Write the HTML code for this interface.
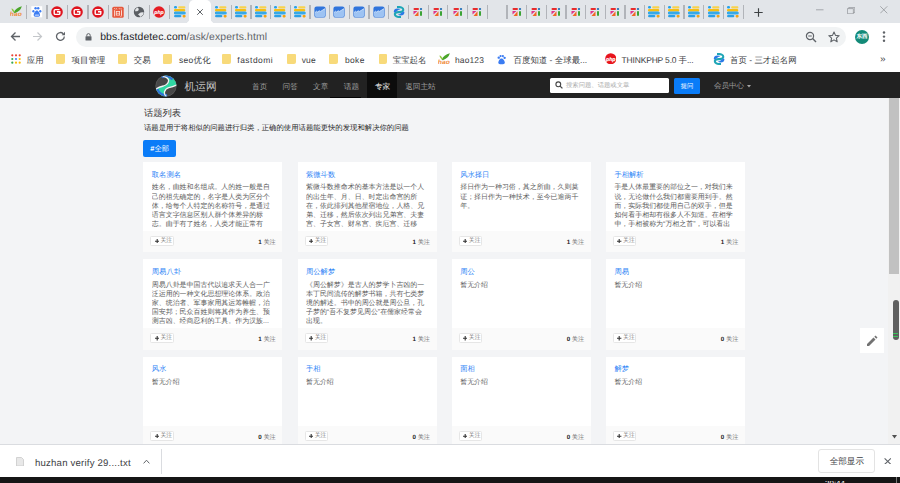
<!DOCTYPE html>
<html><head><meta charset="utf-8">
<style>
*{box-sizing:border-box}
i{font-style:normal}
html,body{margin:0;padding:0}
body{width:900px;height:483px;overflow:hidden;position:relative;background:#fff;font-family:"Liberation Sans",sans-serif;text-rendering:geometricPrecision}
.abs{position:absolute}
#tabstrip{position:absolute;left:0;top:0;width:900px;height:23.3px;background:#e2e5e9}
.ico{position:absolute;width:12px;height:12px}
.ico svg{display:block}
.sep{position:absolute;top:5.2px;width:1.3px;height:13.8px;background:#b1b4b9}
#atab{position:absolute;left:188.7px;top:0;width:22.6px;height:23.3px;background:#fff;border-radius:5px 5px 0 0}
#atab:before,#atab:after{content:"";position:absolute;bottom:0;width:3px;height:3px}
#atab:before{left:-3px;background:radial-gradient(circle at 0 0,transparent 2.6px,#fff 3px)}
#atab:after{right:-3px;background:radial-gradient(circle at 100% 0,transparent 2.6px,#fff 3px)}
#toolbar{position:absolute;left:0;top:23.3px;width:900px;height:48.7px;background:#fff}
#omni{position:absolute;left:76.2px;top:26.5px;width:769.8px;height:20.2px;border-radius:10px;background:#f1f3f4}
#url{position:absolute;left:100.2px;top:31.5px;font-size:10.4px;line-height:12px;color:#5f6368;white-space:nowrap;letter-spacing:0.12px}
#url b{font-weight:normal;color:#202124}
.bm{--z:0.45px;position:absolute;top:54.5px;font-size:8.45px;line-height:10px;color:#3c4043;white-space:nowrap}
.fold{position:absolute;top:53.7px;width:8.7px;height:10.5px;background:#f8da7a;border-radius:1px 1px 2px 1px}
#hdr{position:absolute;left:0;top:72px;width:900px;height:25.6px;background:#222}
.nav{--z:-0.35px;position:absolute;top:81.6px;font-size:7.65px;line-height:9px;color:#9d9d9d;white-space:nowrap}
#page{position:absolute;left:0;top:97.6px;width:888px;height:346.4px;background:#f3f4f6}
.card{position:absolute;width:139px;height:90.3px;background:#fff;overflow:hidden}
.ct{--z:0.3px;position:absolute;left:8.5px;top:7.5px;font-size:7.3px;line-height:9px;color:#2a82f6;white-space:nowrap}
.cd{position:absolute;left:8.5px;top:21.4px;width:128px;height:46px;overflow:hidden;font-size:6.96px;line-height:9.15px;color:#5a5a5a;white-space:nowrap}
.cf{position:absolute;left:0;top:69px;width:139px;height:21.3px;background:#fafafa}
.fb{position:absolute;left:7.1px;top:4.9px;width:23.4px;height:10.1px;border:1px solid #e6e6e6;background:#fff;border-radius:1.5px;display:flex;align-items:center;padding-left:3.3px}
.fb svg{display:block;flex:none}
.fbt{display:block;margin-left:1.4px;font-size:5.9px;line-height:8px;color:#777;white-space:nowrap}
.cnt{position:absolute;right:6.5px;top:8px;font-size:6.2px;line-height:8px;color:#777;white-space:nowrap}
.cnt b{color:#222}
#dl{position:absolute;left:0;top:444px;width:900px;height:33.4px;background:#fff;border-top:1px solid #dadce0}
#task{position:absolute;left:0;top:477.4px;width:900px;height:6px;background:#151515}
</style></head><body>
<div id="tabstrip"></div>
<div class="ico" style="left:10.20px;top:6.00px"><svg width="12" height="12" viewBox="0 0 12 12"><path d="M3.6 6.8 Q5.5 1.8 11.9 0.3 Q10.5 5.2 4.6 7.2Z" fill="#4aa52a"/><path d="M1.4 2.4 Q3.8 2.6 4.9 6.6 Q2.2 5.9 1.4 2.4Z" fill="#8cc63a"/><text x="-0.2" y="10.4" font-family="Liberation Sans" font-size="6.2" font-style="italic" font-weight="bold" fill="#f08d3c" textLength="12" lengthAdjust="spacingAndGlyphs">hao</text></svg></div>
<div class="ico" style="left:30.63px;top:6.00px"><svg width="12" height="12" viewBox="0 0 12 12"><rect x="0.3" y="0.2" width="10.9" height="11.1" fill="#fff"/><ellipse cx="2.4" cy="5.2" rx="1.1" ry="1.3" fill="#3c7df3"/><ellipse cx="4.6" cy="2.3" rx="1.2" ry="1.2" fill="#3c7df3"/><ellipse cx="7.2" cy="2.3" rx="1.2" ry="1.2" fill="#3c7df3"/><ellipse cx="9.3" cy="5.2" rx="1.1" ry="1.3" fill="#3c7df3"/><path d="M5.9 4.6 C4.4 4.6 2.8 7.4 2.7 9 C2.6 10.6 4 10.8 5.9 10.8 C7.8 10.8 9.1 10.6 9 9 C8.9 7.4 7.4 4.6 5.9 4.6Z" fill="#3c7df3"/><path d="M4.3 8.4 V9.6 H5.5 V8.4 M6.4 8.4 V9.6 H7.6 V8.4" fill="none" stroke="#fff" stroke-width="0.55"/></svg></div>
<div class="ico" style="left:51.06px;top:6.00px"><svg width="12" height="12" viewBox="0 0 12 12"><circle cx="6" cy="6" r="5.8" fill="#e0141e"/><path d="M8.6 3.6 H4.2 Q3.2 3.6 3.2 4.6 V7.4 Q3.2 8.4 4.2 8.4 H7.8 Q8.8 8.4 8.8 7.4 V5.8 H6" fill="none" stroke="#fff" stroke-width="1.4"/></svg></div>
<div class="ico" style="left:71.49px;top:6.00px"><svg width="12" height="12" viewBox="0 0 12 12"><circle cx="6" cy="6" r="5.8" fill="#e0141e"/><path d="M8.6 3.6 H4.2 Q3.2 3.6 3.2 4.6 V7.4 Q3.2 8.4 4.2 8.4 H7.8 Q8.8 8.4 8.8 7.4 V5.8 H6" fill="none" stroke="#fff" stroke-width="1.4"/></svg></div>
<div class="ico" style="left:91.92px;top:6.00px"><svg width="12" height="12" viewBox="0 0 12 12"><circle cx="6" cy="6" r="5.8" fill="#e0141e"/><path d="M8.6 3.6 H4.2 Q3.2 3.6 3.2 4.6 V7.4 Q3.2 8.4 4.2 8.4 H7.8 Q8.8 8.4 8.8 7.4 V5.8 H6" fill="none" stroke="#fff" stroke-width="1.4"/></svg></div>
<div class="ico" style="left:112.35px;top:6.00px"><svg width="12" height="12" viewBox="0 0 12 12"><rect x="0.3" y="0.8" width="11.4" height="11" rx="1.5" fill="#e6573b"/><path d="M2.3 2.2 L3.2 3.4 M4.2 2.2 L4.8 3.4 M7 2.2 L7.9 3.4 M8.9 2.2 L9.5 3.4" stroke="#fde5de" stroke-width="0.8"/><path d="M2.6 4.2 V10.4 M9.5 4.2 V9.6 Q9.5 10.6 8.5 10.3" fill="none" stroke="#fde5de" stroke-width="0.9"/><rect x="4.3" y="5.5" width="3.3" height="3.6" fill="none" stroke="#fde5de" stroke-width="0.8"/><path d="M4.3 7.3 H7.6" stroke="#fde5de" stroke-width="0.6"/></svg></div>
<div class="ico" style="left:132.78px;top:6.00px"><svg width="12" height="12" viewBox="0 0 12 12"><circle cx="6" cy="6" r="5.2" fill="#5a5e63"/><path d="M4.2 1.4 Q6.5 2.4 5.4 4.4 Q3.8 5.6 2 5.2 Q1.8 3 4.2 1.4Z" fill="#e3e5e8"/><path d="M10.9 6.6 Q9.5 6 7.6 6.6 Q6 7.6 5 8.6 Q6.4 9.6 7.4 10.9 Q10.3 9.8 10.9 6.6Z" fill="#e3e5e8"/></svg></div>
<div class="ico" style="left:153.21px;top:6.00px"><svg width="12" height="12" viewBox="0 0 12 12"><circle cx="6" cy="6" r="5.8" fill="#e51c23"/><text x="6" y="7.7" text-anchor="middle" font-family="Liberation Sans" font-size="5.2" font-style="italic" font-weight="bold" fill="#ffffff" stroke="#fff" stroke-width="0.15">php</text></svg></div>
<div class="ico" style="left:173.64px;top:6.00px"><svg width="12" height="12" viewBox="0 0 12 12"><rect x="4.2" y="0.2" width="7.2" height="2.2" rx="1" fill="#f7d24e"/><rect x="0" y="0.1" width="3" height="2.4" rx="1.2" fill="#27a3ea"/><path d="M1.2 2.9 H10 A1.3 1.3 0 0 1 10 5.5 H1.2 A1.2 1.2 0 0 1 1.2 2.9Z" fill="#f7bd12"/><path d="M1.2 5.5 H10.3 A1.5 1.5 0 0 1 10.3 8.5 H1.2 A1.5 1.5 0 0 1 1.2 5.5Z" fill="#35a9e9"/><rect x="0" y="8.9" width="7.4" height="2.4" rx="1.2" fill="#2aa0e6"/><rect x="8.6" y="8.9" width="3" height="2.5" rx="0.8" fill="#f6a312"/></svg></div>
<div class="sep" style="left:26.00px"></div>
<div class="sep" style="left:46.43px"></div>
<div class="sep" style="left:66.86px"></div>
<div class="sep" style="left:87.29px"></div>
<div class="sep" style="left:107.72px"></div>
<div class="sep" style="left:128.15px"></div>
<div class="sep" style="left:148.58px"></div>
<div class="sep" style="left:169.01px"></div>
<div class="ico" style="left:215.30px;top:6.00px"><svg width="12" height="12" viewBox="0 0 12 12"><rect x="4.2" y="0.2" width="7.2" height="2.2" rx="1" fill="#f7d24e"/><rect x="0" y="0.1" width="3" height="2.4" rx="1.2" fill="#27a3ea"/><path d="M1.2 2.9 H10 A1.3 1.3 0 0 1 10 5.5 H1.2 A1.2 1.2 0 0 1 1.2 2.9Z" fill="#f7bd12"/><path d="M1.2 5.5 H10.3 A1.5 1.5 0 0 1 10.3 8.5 H1.2 A1.5 1.5 0 0 1 1.2 5.5Z" fill="#35a9e9"/><rect x="0" y="8.9" width="7.4" height="2.4" rx="1.2" fill="#2aa0e6"/><rect x="8.6" y="8.9" width="3" height="2.5" rx="0.8" fill="#f6a312"/></svg></div>
<div class="ico" style="left:234.99px;top:6.00px"><svg width="12" height="12" viewBox="0 0 12 12"><rect x="4.2" y="0.2" width="7.2" height="2.2" rx="1" fill="#f7d24e"/><rect x="0" y="0.1" width="3" height="2.4" rx="1.2" fill="#27a3ea"/><path d="M1.2 2.9 H10 A1.3 1.3 0 0 1 10 5.5 H1.2 A1.2 1.2 0 0 1 1.2 2.9Z" fill="#f7bd12"/><path d="M1.2 5.5 H10.3 A1.5 1.5 0 0 1 10.3 8.5 H1.2 A1.5 1.5 0 0 1 1.2 5.5Z" fill="#35a9e9"/><rect x="0" y="8.9" width="7.4" height="2.4" rx="1.2" fill="#2aa0e6"/><rect x="8.6" y="8.9" width="3" height="2.5" rx="0.8" fill="#f6a312"/></svg></div>
<div class="ico" style="left:254.68px;top:6.00px"><svg width="12" height="12" viewBox="0 0 12 12"><rect x="4.2" y="0.2" width="7.2" height="2.2" rx="1" fill="#f7d24e"/><rect x="0" y="0.1" width="3" height="2.4" rx="1.2" fill="#27a3ea"/><path d="M1.2 2.9 H10 A1.3 1.3 0 0 1 10 5.5 H1.2 A1.2 1.2 0 0 1 1.2 2.9Z" fill="#f7bd12"/><path d="M1.2 5.5 H10.3 A1.5 1.5 0 0 1 10.3 8.5 H1.2 A1.5 1.5 0 0 1 1.2 5.5Z" fill="#35a9e9"/><rect x="0" y="8.9" width="7.4" height="2.4" rx="1.2" fill="#2aa0e6"/><rect x="8.6" y="8.9" width="3" height="2.5" rx="0.8" fill="#f6a312"/></svg></div>
<div class="ico" style="left:274.37px;top:6.00px"><svg width="12" height="12" viewBox="0 0 12 12"><rect x="4.2" y="0.2" width="7.2" height="2.2" rx="1" fill="#f7d24e"/><rect x="0" y="0.1" width="3" height="2.4" rx="1.2" fill="#27a3ea"/><path d="M1.2 2.9 H10 A1.3 1.3 0 0 1 10 5.5 H1.2 A1.2 1.2 0 0 1 1.2 2.9Z" fill="#f7bd12"/><path d="M1.2 5.5 H10.3 A1.5 1.5 0 0 1 10.3 8.5 H1.2 A1.5 1.5 0 0 1 1.2 5.5Z" fill="#35a9e9"/><rect x="0" y="8.9" width="7.4" height="2.4" rx="1.2" fill="#2aa0e6"/><rect x="8.6" y="8.9" width="3" height="2.5" rx="0.8" fill="#f6a312"/></svg></div>
<div class="ico" style="left:294.06px;top:6.00px"><svg width="12" height="12" viewBox="0 0 12 12"><rect x="4.2" y="0.2" width="7.2" height="2.2" rx="1" fill="#f7d24e"/><rect x="0" y="0.1" width="3" height="2.4" rx="1.2" fill="#27a3ea"/><path d="M1.2 2.9 H10 A1.3 1.3 0 0 1 10 5.5 H1.2 A1.2 1.2 0 0 1 1.2 2.9Z" fill="#f7bd12"/><path d="M1.2 5.5 H10.3 A1.5 1.5 0 0 1 10.3 8.5 H1.2 A1.5 1.5 0 0 1 1.2 5.5Z" fill="#35a9e9"/><rect x="0" y="8.9" width="7.4" height="2.4" rx="1.2" fill="#2aa0e6"/><rect x="8.6" y="8.9" width="3" height="2.5" rx="0.8" fill="#f6a312"/></svg></div>
<div class="ico" style="left:313.75px;top:6.00px"><svg width="12" height="12" viewBox="0 0 12 12"><rect x="0.4" y="0.6" width="11.2" height="11" rx="2.2" fill="#2f74dc"/><path d="M1 11 V6.5 L2.6 5.2 L3.6 6 L5.2 4.8 L6.5 5.4 L8.3 4.3 L11.1 2.6 V9.4 Q11.1 11.1 9.4 11.1 H2.6 Q1 11.1 1 9.4Z" fill="#9dc3f3"/><path d="M1 6.5 L2.6 5.2 L3.6 6 L5.2 4.8 L6.5 5.4 L8.3 4.3 L11.1 2.6" fill="none" stroke="#e8f1fc" stroke-width="0.7"/></svg></div>
<div class="ico" style="left:333.44px;top:6.00px"><svg width="12" height="12" viewBox="0 0 12 12"><rect x="0.4" y="0.6" width="11.2" height="11" rx="2.2" fill="#2f74dc"/><path d="M1 11 V6.5 L2.6 5.2 L3.6 6 L5.2 4.8 L6.5 5.4 L8.3 4.3 L11.1 2.6 V9.4 Q11.1 11.1 9.4 11.1 H2.6 Q1 11.1 1 9.4Z" fill="#9dc3f3"/><path d="M1 6.5 L2.6 5.2 L3.6 6 L5.2 4.8 L6.5 5.4 L8.3 4.3 L11.1 2.6" fill="none" stroke="#e8f1fc" stroke-width="0.7"/></svg></div>
<div class="ico" style="left:353.13px;top:6.00px"><svg width="12" height="12" viewBox="0 0 12 12"><rect x="0.4" y="0.6" width="11.2" height="11" rx="2.2" fill="#2f74dc"/><path d="M1 11 V6.5 L2.6 5.2 L3.6 6 L5.2 4.8 L6.5 5.4 L8.3 4.3 L11.1 2.6 V9.4 Q11.1 11.1 9.4 11.1 H2.6 Q1 11.1 1 9.4Z" fill="#9dc3f3"/><path d="M1 6.5 L2.6 5.2 L3.6 6 L5.2 4.8 L6.5 5.4 L8.3 4.3 L11.1 2.6" fill="none" stroke="#e8f1fc" stroke-width="0.7"/></svg></div>
<div class="ico" style="left:372.82px;top:6.00px"><svg width="12" height="12" viewBox="0 0 12 12"><rect x="0.4" y="0.6" width="11.2" height="11" rx="2.2" fill="#2f74dc"/><path d="M1 11 V6.5 L2.6 5.2 L3.6 6 L5.2 4.8 L6.5 5.4 L8.3 4.3 L11.1 2.6 V9.4 Q11.1 11.1 9.4 11.1 H2.6 Q1 11.1 1 9.4Z" fill="#9dc3f3"/><path d="M1 6.5 L2.6 5.2 L3.6 6 L5.2 4.8 L6.5 5.4 L8.3 4.3 L11.1 2.6" fill="none" stroke="#e8f1fc" stroke-width="0.7"/></svg></div>
<div class="ico" style="left:392.51px;top:6.00px"><svg width="12" height="12" viewBox="0 0 12 12"><path d="M4 1 Q10.3 0.8 10.3 3.9 Q10 6.2 6 6.1 Q2 6 1.8 8.1 Q1.8 11.2 8 11" fill="none" stroke="#1ea6b6" stroke-width="2.1"/><path d="M0.8 5.4 Q1 2.5 4.4 2.5 Q6.6 2.5 7.3 3.5 Q5.6 3.6 4.6 4.6 Q3.3 5.9 1.3 6.5 Q0.7 6.1 0.8 5.4Z" fill="#2a7ae6"/><path d="M11.4 6.6 Q11.2 9.5 7.8 9.5 Q5.6 9.5 4.9 8.5 Q6.6 8.4 7.6 7.4 Q8.9 6.1 10.9 5.5 Q11.5 5.9 11.4 6.6Z" fill="#2a7ae6"/></svg></div>
<div class="ico" style="left:412.20px;top:6.00px"><svg width="12" height="12" viewBox="0 0 12 12"><rect x="1.5" y="2" width="5.5" height="2" rx="1" fill="#e82b2b"/><ellipse cx="9" cy="3" rx="1.2" ry="0.95" fill="#1e6fb8"/><path d="M1.5 5 L5.5 5 L1.5 8.5Z" fill="#e0338a"/><path d="M6.5 5.2 L6.5 10 L2.5 10Z" fill="#f26522"/><rect x="8" y="5" width="2" height="5" rx="1" fill="#3aa335"/></svg></div>
<div class="ico" style="left:431.89px;top:6.00px"><svg width="12" height="12" viewBox="0 0 12 12"><rect x="1.5" y="2" width="5.5" height="2" rx="1" fill="#e82b2b"/><ellipse cx="9" cy="3" rx="1.2" ry="0.95" fill="#1e6fb8"/><path d="M1.5 5 L5.5 5 L1.5 8.5Z" fill="#e0338a"/><path d="M6.5 5.2 L6.5 10 L2.5 10Z" fill="#f26522"/><rect x="8" y="5" width="2" height="5" rx="1" fill="#3aa335"/></svg></div>
<div class="ico" style="left:451.58px;top:6.00px"><svg width="12" height="12" viewBox="0 0 12 12"><rect x="1.5" y="2" width="5.5" height="2" rx="1" fill="#e82b2b"/><ellipse cx="9" cy="3" rx="1.2" ry="0.95" fill="#1e6fb8"/><path d="M1.5 5 L5.5 5 L1.5 8.5Z" fill="#e0338a"/><path d="M6.5 5.2 L6.5 10 L2.5 10Z" fill="#f26522"/><rect x="8" y="5" width="2" height="5" rx="1" fill="#3aa335"/></svg></div>
<div class="ico" style="left:471.27px;top:6.00px"><svg width="12" height="12" viewBox="0 0 12 12"><rect x="1.5" y="2" width="5.5" height="2" rx="1" fill="#e82b2b"/><ellipse cx="9" cy="3" rx="1.2" ry="0.95" fill="#1e6fb8"/><path d="M1.5 5 L5.5 5 L1.5 8.5Z" fill="#e0338a"/><path d="M6.5 5.2 L6.5 10 L2.5 10Z" fill="#f26522"/><rect x="8" y="5" width="2" height="5" rx="1" fill="#3aa335"/></svg></div>
<div class="ico" style="left:490.96px;top:6.00px"></div>
<div class="ico" style="left:510.65px;top:6.00px"><svg width="12" height="12" viewBox="0 0 12 12"><rect x="1.5" y="2" width="5.5" height="2" rx="1" fill="#e82b2b"/><ellipse cx="9" cy="3" rx="1.2" ry="0.95" fill="#1e6fb8"/><path d="M1.5 5 L5.5 5 L1.5 8.5Z" fill="#e0338a"/><path d="M6.5 5.2 L6.5 10 L2.5 10Z" fill="#f26522"/><rect x="8" y="5" width="2" height="5" rx="1" fill="#3aa335"/></svg></div>
<div class="ico" style="left:530.34px;top:6.00px"><svg width="12" height="12" viewBox="0 0 12 12"><rect x="1.5" y="2" width="5.5" height="2" rx="1" fill="#e82b2b"/><ellipse cx="9" cy="3" rx="1.2" ry="0.95" fill="#1e6fb8"/><path d="M1.5 5 L5.5 5 L1.5 8.5Z" fill="#e0338a"/><path d="M6.5 5.2 L6.5 10 L2.5 10Z" fill="#f26522"/><rect x="8" y="5" width="2" height="5" rx="1" fill="#3aa335"/></svg></div>
<div class="ico" style="left:550.03px;top:6.00px"><svg width="12" height="12" viewBox="0 0 12 12"><rect x="1.5" y="2" width="5.5" height="2" rx="1" fill="#e82b2b"/><ellipse cx="9" cy="3" rx="1.2" ry="0.95" fill="#1e6fb8"/><path d="M1.5 5 L5.5 5 L1.5 8.5Z" fill="#e0338a"/><path d="M6.5 5.2 L6.5 10 L2.5 10Z" fill="#f26522"/><rect x="8" y="5" width="2" height="5" rx="1" fill="#3aa335"/></svg></div>
<div class="ico" style="left:569.72px;top:6.00px"><svg width="12" height="12" viewBox="0 0 12 12"><rect x="1.5" y="2" width="5.5" height="2" rx="1" fill="#e82b2b"/><ellipse cx="9" cy="3" rx="1.2" ry="0.95" fill="#1e6fb8"/><path d="M1.5 5 L5.5 5 L1.5 8.5Z" fill="#e0338a"/><path d="M6.5 5.2 L6.5 10 L2.5 10Z" fill="#f26522"/><rect x="8" y="5" width="2" height="5" rx="1" fill="#3aa335"/></svg></div>
<div class="ico" style="left:589.41px;top:6.00px"><svg width="12" height="12" viewBox="0 0 12 12"><rect x="1.5" y="2" width="5.5" height="2" rx="1" fill="#e82b2b"/><ellipse cx="9" cy="3" rx="1.2" ry="0.95" fill="#1e6fb8"/><path d="M1.5 5 L5.5 5 L1.5 8.5Z" fill="#e0338a"/><path d="M6.5 5.2 L6.5 10 L2.5 10Z" fill="#f26522"/><rect x="8" y="5" width="2" height="5" rx="1" fill="#3aa335"/></svg></div>
<div class="ico" style="left:609.10px;top:6.00px"><svg width="12" height="12" viewBox="0 0 12 12"><rect x="1.5" y="2" width="5.5" height="2" rx="1" fill="#e82b2b"/><ellipse cx="9" cy="3" rx="1.2" ry="0.95" fill="#1e6fb8"/><path d="M1.5 5 L5.5 5 L1.5 8.5Z" fill="#e0338a"/><path d="M6.5 5.2 L6.5 10 L2.5 10Z" fill="#f26522"/><rect x="8" y="5" width="2" height="5" rx="1" fill="#3aa335"/></svg></div>
<div class="ico" style="left:628.79px;top:6.00px"><svg width="12" height="12" viewBox="0 0 12 12"><rect x="1.5" y="2" width="5.5" height="2" rx="1" fill="#e82b2b"/><ellipse cx="9" cy="3" rx="1.2" ry="0.95" fill="#1e6fb8"/><path d="M1.5 5 L5.5 5 L1.5 8.5Z" fill="#e0338a"/><path d="M6.5 5.2 L6.5 10 L2.5 10Z" fill="#f26522"/><rect x="8" y="5" width="2" height="5" rx="1" fill="#3aa335"/></svg></div>
<div class="ico" style="left:648.48px;top:6.00px"><svg width="12" height="12" viewBox="0 0 12 12"><rect x="4.2" y="0.2" width="7.2" height="2.2" rx="1" fill="#f7d24e"/><rect x="0" y="0.1" width="3" height="2.4" rx="1.2" fill="#27a3ea"/><path d="M1.2 2.9 H10 A1.3 1.3 0 0 1 10 5.5 H1.2 A1.2 1.2 0 0 1 1.2 2.9Z" fill="#f7bd12"/><path d="M1.2 5.5 H10.3 A1.5 1.5 0 0 1 10.3 8.5 H1.2 A1.5 1.5 0 0 1 1.2 5.5Z" fill="#35a9e9"/><rect x="0" y="8.9" width="7.4" height="2.4" rx="1.2" fill="#2aa0e6"/><rect x="8.6" y="8.9" width="3" height="2.5" rx="0.8" fill="#f6a312"/></svg></div>
<div class="ico" style="left:668.17px;top:6.00px"><svg width="12" height="12" viewBox="0 0 12 12"><rect x="4.2" y="0.2" width="7.2" height="2.2" rx="1" fill="#f7d24e"/><rect x="0" y="0.1" width="3" height="2.4" rx="1.2" fill="#27a3ea"/><path d="M1.2 2.9 H10 A1.3 1.3 0 0 1 10 5.5 H1.2 A1.2 1.2 0 0 1 1.2 2.9Z" fill="#f7bd12"/><path d="M1.2 5.5 H10.3 A1.5 1.5 0 0 1 10.3 8.5 H1.2 A1.5 1.5 0 0 1 1.2 5.5Z" fill="#35a9e9"/><rect x="0" y="8.9" width="7.4" height="2.4" rx="1.2" fill="#2aa0e6"/><rect x="8.6" y="8.9" width="3" height="2.5" rx="0.8" fill="#f6a312"/></svg></div>
<div class="ico" style="left:687.86px;top:6.00px"><svg width="12" height="12" viewBox="0 0 12 12"><rect x="4.2" y="0.2" width="7.2" height="2.2" rx="1" fill="#f7d24e"/><rect x="0" y="0.1" width="3" height="2.4" rx="1.2" fill="#27a3ea"/><path d="M1.2 2.9 H10 A1.3 1.3 0 0 1 10 5.5 H1.2 A1.2 1.2 0 0 1 1.2 2.9Z" fill="#f7bd12"/><path d="M1.2 5.5 H10.3 A1.5 1.5 0 0 1 10.3 8.5 H1.2 A1.5 1.5 0 0 1 1.2 5.5Z" fill="#35a9e9"/><rect x="0" y="8.9" width="7.4" height="2.4" rx="1.2" fill="#2aa0e6"/><rect x="8.6" y="8.9" width="3" height="2.5" rx="0.8" fill="#f6a312"/></svg></div>
<div class="ico" style="left:707.55px;top:6.00px"><svg width="12" height="12" viewBox="0 0 12 12"><rect x="4.2" y="0.2" width="7.2" height="2.2" rx="1" fill="#f7d24e"/><rect x="0" y="0.1" width="3" height="2.4" rx="1.2" fill="#27a3ea"/><path d="M1.2 2.9 H10 A1.3 1.3 0 0 1 10 5.5 H1.2 A1.2 1.2 0 0 1 1.2 2.9Z" fill="#f7bd12"/><path d="M1.2 5.5 H10.3 A1.5 1.5 0 0 1 10.3 8.5 H1.2 A1.5 1.5 0 0 1 1.2 5.5Z" fill="#35a9e9"/><rect x="0" y="8.9" width="7.4" height="2.4" rx="1.2" fill="#2aa0e6"/><rect x="8.6" y="8.9" width="3" height="2.5" rx="0.8" fill="#f6a312"/></svg></div>
<div class="ico" style="left:727.24px;top:6.00px"><svg width="12" height="12" viewBox="0 0 12 12"><rect x="4.2" y="0.2" width="7.2" height="2.2" rx="1" fill="#f7d24e"/><rect x="0" y="0.1" width="3" height="2.4" rx="1.2" fill="#27a3ea"/><path d="M1.2 2.9 H10 A1.3 1.3 0 0 1 10 5.5 H1.2 A1.2 1.2 0 0 1 1.2 2.9Z" fill="#f7bd12"/><path d="M1.2 5.5 H10.3 A1.5 1.5 0 0 1 10.3 8.5 H1.2 A1.5 1.5 0 0 1 1.2 5.5Z" fill="#35a9e9"/><rect x="0" y="8.9" width="7.4" height="2.4" rx="1.2" fill="#2aa0e6"/><rect x="8.6" y="8.9" width="3" height="2.5" rx="0.8" fill="#f6a312"/></svg></div>
<div class="sep" style="left:230.60px"></div>
<div class="sep" style="left:250.29px"></div>
<div class="sep" style="left:269.98px"></div>
<div class="sep" style="left:289.67px"></div>
<div class="sep" style="left:309.36px"></div>
<div class="sep" style="left:329.05px"></div>
<div class="sep" style="left:348.74px"></div>
<div class="sep" style="left:368.43px"></div>
<div class="sep" style="left:388.12px"></div>
<div class="sep" style="left:407.81px"></div>
<div class="sep" style="left:427.50px"></div>
<div class="sep" style="left:447.19px"></div>
<div class="sep" style="left:466.88px"></div>
<div class="sep" style="left:486.57px"></div>
<div class="sep" style="left:506.26px"></div>
<div class="sep" style="left:525.95px"></div>
<div class="sep" style="left:545.64px"></div>
<div class="sep" style="left:565.33px"></div>
<div class="sep" style="left:585.02px"></div>
<div class="sep" style="left:604.71px"></div>
<div class="sep" style="left:624.40px"></div>
<div class="sep" style="left:644.09px"></div>
<div class="sep" style="left:663.78px"></div>
<div class="sep" style="left:683.47px"></div>
<div class="sep" style="left:703.16px"></div>
<div class="sep" style="left:722.85px"></div>
<div class="sep" style="left:742.54px"></div>
<div id="atab"><svg class="abs" style="left:7.2px;top:8.3px" width="8" height="8" viewBox="0 0 8 8"><path d="M1.2 1.2 L6.8 6.8 M6.8 1.2 L1.2 6.8" stroke="#5f6368" stroke-width="1"/></svg></div>
<!-- new tab + window controls -->
<svg class="abs" style="left:754.3px;top:7.6px" width="9" height="9" viewBox="0 0 9 9"><path d="M4.5 0.3 V8.7 M0.3 4.5 H8.7" stroke="#3c4043" stroke-width="1.15"/></svg>
<svg class="abs" style="left:816px;top:5px" width="7.5" height="10" viewBox="0 0 7.5 10"><path d="M0 4.8 H7.5" stroke="#8a8d91" stroke-width="0.7"/></svg>
<svg class="abs" style="left:847.2px;top:6.8px" width="8.2" height="7.2" viewBox="0 0 8.2 7.2"><path d="M1.8 1.6 V0.4 H7.8 V5.6 H6.4 M0.4 1.6 H6.4 V6.8 H0.4Z" fill="none" stroke="#8a8d91" stroke-width="0.7"/></svg>
<svg class="abs" style="left:880px;top:6px" width="7.6" height="7.6" viewBox="0 0 7.6 7.6"><path d="M0.3 0.3 L7.3 7.3 M7.3 0.3 L0.3 7.3" stroke="#8a8d91" stroke-width="0.7"/></svg>

<div id="toolbar"></div>
<!-- nav buttons -->
<svg class="abs" style="left:10px;top:31px" width="11" height="11" viewBox="0 0 11 11"><path d="M10 5.5 H1.5 M5.5 1.5 L1.5 5.5 L5.5 9.5" fill="none" stroke="#5f6368" stroke-width="1.3"/></svg>
<svg class="abs" style="left:31.6px;top:30.8px" width="11" height="11" viewBox="0 0 11 11"><path d="M1 5.5 H9.5 M5.5 1.5 L9.5 5.5 L5.5 9.5" fill="none" stroke="#c4c7ca" stroke-width="1.2"/></svg>
<svg class="abs" style="left:55px;top:30.8px" width="11" height="11" viewBox="0 0 11 11"><path d="M9.3 5.5 A3.9 3.9 0 1 1 8.2 2.7" fill="none" stroke="#5f6368" stroke-width="1.3"/><path d="M10 0.8 V4.2 H6.6Z" fill="#5f6368"/></svg>
<div id="omni"></div>
<svg class="abs" style="left:85px;top:33px" width="7" height="7.5" viewBox="0 0 7 7.5"><path d="M1.8 3.3 V2.3 A1.7 1.7 0 0 1 5.2 2.3 V3.3" fill="none" stroke="#5f6368" stroke-width="1"/><rect x="0.5" y="3.2" width="6" height="4.3" rx="0.5" fill="#5f6368"/></svg>
<div id="url"><b>bbs.fastdetec.com</b>/ask/experts.html</div>
<svg class="abs" style="left:805px;top:31px" width="12" height="12" viewBox="0 0 12 12"><circle cx="5" cy="5" r="3.6" fill="none" stroke="#5f6368" stroke-width="1.2"/><path d="M7.6 7.6 L11 11" stroke="#5f6368" stroke-width="1.4"/><path d="M3.2 5 H6.8" stroke="#5f6368" stroke-width="1"/></svg>
<svg class="abs" style="left:828px;top:30.8px" width="12" height="12" viewBox="0 0 12 12"><path d="M6 1 L7.5 4.4 L11.2 4.7 L8.4 7.1 L9.2 10.8 L6 8.9 L2.8 10.8 L3.6 7.1 L0.8 4.7 L4.5 4.4Z" fill="none" stroke="#5f6368" stroke-width="1.1" stroke-linejoin="round"/></svg>
<div class="abs" style="left:855px;top:29.6px;width:14px;height:14px;border-radius:50%;background:#138a78;color:#fff;font-size:5.6px;line-height:14px;text-align:center;font-weight:bold"><i>东西</i></div>
<svg class="abs" style="left:882.4px;top:31px" width="4" height="12" viewBox="0 0 4 12"><circle cx="2" cy="1.5" r="1.2" fill="#5f6368"/><circle cx="2" cy="5.6" r="1.2" fill="#5f6368"/><circle cx="2" cy="9.7" r="1.2" fill="#5f6368"/></svg>

<!-- bookmarks -->
<svg class="abs" style="left:10.7px;top:54px" width="10" height="10" viewBox="0 0 10 10">
<circle cx="1.3" cy="1.3" r="1.1" fill="#ea4335"/><circle cx="5" cy="1.3" r="1.1" fill="#ea4335"/><circle cx="8.7" cy="1.3" r="1.1" fill="#ea4335"/>
<circle cx="1.3" cy="5" r="1.1" fill="#34a853"/><circle cx="5" cy="5" r="1.1" fill="#4285f4"/><circle cx="8.7" cy="5" r="1.1" fill="#fbbc05"/>
<circle cx="1.3" cy="8.7" r="1.1" fill="#34a853"/><circle cx="5" cy="8.7" r="1.1" fill="#fbbc05"/><circle cx="8.7" cy="8.7" r="1.1" fill="#fbbc05"/></svg>
<div class="bm" style="left:26.7px"><i>应用</i></div>
<div class="fold" style="left:56.1px"></div><div class="bm" style="left:71.5px"><i>项目管理</i></div>
<div class="fold" style="left:118.2px"></div><div class="bm" style="left:133.7px"><i>交易</i></div>
<div class="fold" style="left:162.9px"></div><div class="bm" style="left:179px;letter-spacing:0.3px">seo<i>优化</i></div>
<div class="fold" style="left:221.9px"></div><div class="bm" style="left:237.3px;letter-spacing:0.5px">fastdomi</div>
<div class="fold" style="left:286.9px"></div><div class="bm" style="left:301.7px;letter-spacing:0.2px">vue</div>
<div class="fold" style="left:329.2px"></div><div class="bm" style="left:345px;letter-spacing:0.35px">boke</div>
<div class="fold" style="left:378.5px"></div><div class="bm" style="left:392.7px"><i>宝宝起名</i></div>
<div class="ico" style="left:437.8px;top:53.2px"><svg width="12" height="12" viewBox="0 0 12 12"><path d="M3.6 6.8 Q5.5 1.8 11.9 0.3 Q10.5 5.2 4.6 7.2Z" fill="#4aa52a"/><path d="M1.4 2.4 Q3.8 2.6 4.9 6.6 Q2.2 5.9 1.4 2.4Z" fill="#8cc63a"/><text x="-0.2" y="10.6" font-family="Liberation Sans" font-size="6.2" font-style="italic" font-weight="bold" fill="#f08d3c" textLength="12" lengthAdjust="spacingAndGlyphs">hao</text></svg></div>
<div class="bm" style="left:455px;letter-spacing:0.15px">hao123</div>
<div class="ico" style="left:496px;top:53.5px"><svg width="11" height="11" viewBox="0 0 12 12"><circle cx="3" cy="4" r="1.3" fill="#3b7cf2"/><circle cx="5" cy="2.3" r="1.2" fill="#3b7cf2"/><circle cx="7.5" cy="2.3" r="1.2" fill="#3b7cf2"/><circle cx="9.4" cy="4.2" r="1.3" fill="#3b7cf2"/><path d="M6 5 C4 5 2.5 8 2.5 9.5 C2.5 11 4 11.2 6 11.2 C8 11.2 9.6 11 9.6 9.5 C9.6 8 8 5 6 5Z" fill="#3b7cf2"/></svg></div>
<div class="bm" style="left:513.5px"><i>百度知道</i> - <i>全球最</i>...</div>
<div class="ico" style="left:604.6px;top:52.9px"><svg width="11.5" height="11.5" viewBox="0 0 12 12"><circle cx="6" cy="6" r="5.8" fill="#e8141c"/><text x="6" y="7.9" text-anchor="middle" font-family="Liberation Sans" font-size="5.4" font-style="italic" font-weight="bold" fill="#fff" stroke="#fff" stroke-width="0.2">php</text></svg></div>
<div class="bm" style="left:621.6px;letter-spacing:-0.15px">THINKPHP 5.0 <i>手</i>...</div>
<div class="ico" style="left:712.6px;top:53.1px"><svg width="12" height="12" viewBox="0 0 12 12"><path d="M4 1 Q10.3 0.8 10.3 3.9 Q10 6.2 6 6.1 Q2 6 1.8 8.1 Q1.8 11.2 8 11" fill="none" stroke="#1ea6b6" stroke-width="2.1"/><path d="M0.8 5.4 Q1 2.5 4.4 2.5 Q6.6 2.5 7.3 3.5 Q5.6 3.6 4.6 4.6 Q3.3 5.9 1.3 6.5 Q0.7 6.1 0.8 5.4Z" fill="#2a7ae6"/><path d="M11.4 6.6 Q11.2 9.5 7.8 9.5 Q5.6 9.5 4.9 8.5 Q6.6 8.4 7.6 7.4 Q8.9 6.1 10.9 5.5 Q11.5 5.9 11.4 6.6Z" fill="#2a7ae6"/></svg></div>
<div class="bm" style="left:730px"><i>首页</i> - <i>三才起名网</i></div>
<div class="bm" style="left:880px;font-size:10px">»</div>

<!-- site header -->
<div id="hdr"></div>
<svg class="abs" style="left:155.35px;top:75px" width="22" height="22" viewBox="0 0 22 22">
<defs><clipPath id="lc"><circle cx="11" cy="11" r="10.5"/></clipPath></defs>
<circle cx="11" cy="11" r="10.5" fill="#474747"/>
<g clip-path="url(#lc)">
<path d="M7.6 -1 L7.8 1.3 Q13.8 2.4 13.6 5.8 Q13.2 9.6 8.4 11 Q4.2 12 0 14.5 L-1 15 L-1 23 L12 23 L11.4 21.6 Q8.8 19.6 9.6 16.6 Q10.4 13.6 13.8 12.6 Q18 11.6 20.8 10.4 L23 9 L23 -1Z" fill="#30d7a2"/>
<path d="M6.5 2.2 A9.4 9.4 0 0 1 17.6 4.3" fill="none" stroke="#2d72d8" stroke-width="2.6"/>
<path d="M1.9 13.6 A9.4 9.4 0 0 0 12.2 20.4" fill="none" stroke="#2d72d8" stroke-width="2.8"/>
<path d="M7.8 1.3 Q13.8 2.4 13.6 5.8 Q13.2 9.6 8.4 11 Q4.2 12 0 14.5" fill="none" stroke="#f2f2f2" stroke-width="1.3"/>
<path d="M11.4 21.6 Q8.8 19.6 9.6 16.6 Q10.4 13.6 13.8 12.6 Q18 11.6 20.8 10.4 L23 9" fill="none" stroke="#f2f2f2" stroke-width="1.3"/>
</g>
<circle cx="11" cy="11" r="10.3" fill="none" stroke="#8a8a8a" stroke-width="0.5" stroke-opacity="0.5"/>
</svg>
<div class="abs" style="--z:-0.23px;left:184.4px;top:80.8px;font-size:10.77px;line-height:12px;color:#c4c4c4;white-space:nowrap"><i>机运网</i></div>
<div class="nav" style="left:252px"><i>首页</i></div>
<div class="nav" style="left:282.5px"><i>问答</i></div>
<div class="nav" style="left:313px"><i>文章</i></div>
<div class="nav" style="left:343.8px"><i>话题</i></div>
<div class="abs" style="left:366.8px;top:72px;width:30.4px;height:25.6px;background:#0c0c0c"></div>
<div class="abs" style="left:330.2px;top:96.6px;width:30.8px;height:1px;background:#050505"></div>
<div class="nav" style="left:374.9px;color:#fff"><i>专家</i></div>
<div class="nav" style="left:405.2px"><i>返回主站</i></div>
<div class="abs" style="left:550px;top:77.5px;width:118.8px;height:15.2px;background:#fff;border-radius:1.5px"></div>
<svg class="abs" style="left:554.5px;top:81px" width="8" height="8" viewBox="0 0 8 8"><circle cx="3.3" cy="3.3" r="2.4" fill="none" stroke="#444" stroke-width="1.1"/><path d="M5.1 5.1 L7.4 7.4" stroke="#444" stroke-width="1.3"/></svg>
<div class="abs" style="--z:0.33px;left:566px;top:81.7px;font-size:6.33px;line-height:8px;color:#aaa;white-space:nowrap"><i>搜索问题、话题或文章</i></div>
<div class="abs" style="left:674px;top:77.5px;width:26px;height:16px;background:#0a7cf8;border-radius:1.5px;color:#fff;font-size:6.3px;line-height:17px;text-align:center"><i>提问</i></div>
<div class="nav" style="left:714px;top:81.3px;font-size:7.52px;--z:-0.48px"><i>会员中心</i></div>
<svg class="abs" style="left:746.6px;top:84.8px" width="4" height="3" viewBox="0 0 4 3"><path d="M0 0 H4 L2 2.5Z" fill="#a8a8a8"/></svg>

<!-- page -->
<div id="page"></div>
<div class="abs" style="--z:0.25px;left:144px;top:107.6px;font-size:9.25px;line-height:11px;color:#333;white-space:nowrap"><i>话题列表</i></div>
<div class="abs" style="--z:0.36px;left:144px;top:122.6px;font-size:7.36px;line-height:9px;color:#1e1e1e;white-space:nowrap"><i>话题是用于将相似的问题进行归类，正确的使用话题能更快的发现和解决你的问题</i></div>
<div class="abs" style="left:143.3px;top:140.2px;width:32.7px;height:16.4px;background:#0a7cf8;border-radius:2px;color:#fff;font-size:7.3px;line-height:18px;text-align:center;white-space:nowrap"><b>#</b><i>全部</i></div>
<div class="card" style="left:143.30px;top:162.00px">
<div class="ct"><i>取名测名</i></div><div class="cd"><i>姓名，由姓和名组成。人的姓一般是自</i><br><i>己的祖先确定的，名字是人类为区分个</i><br><i>体，给每个人特定的名称符号，是通过</i><br><i>语言文字信息区别人群个体差异的标</i><br><i>志。由于有了姓名，人类才能正常有</i></div>
<div class="cf"><div class="fb"><svg width="4.4" height="4.4" viewBox="0 0 4.4 4.4"><path d="M2.2 0 V4.4 M0 2.2 H4.4" stroke="#333" stroke-width="1.1"/></svg><span class="fbt"><i>关注</i></span></div><div class="cnt"><b>1</b> <i>关注</i></div></div></div>
<div class="card" style="left:297.50px;top:162.00px">
<div class="ct"><i>紫微斗数</i></div><div class="cd"><i>紫微斗数推命术的基本方法是以一个人</i><br><i>的出生年、月、日、时定出命宫的所</i><br><i>在，依此排列其他星宿地位，人格、兄</i><br><i>弟、迁移，然后依次列出兄弟宫、夫妻</i><br><i>宫、子女宫、财帛宫、疾厄宫、迁移</i></div>
<div class="cf"><div class="fb"><svg width="4.4" height="4.4" viewBox="0 0 4.4 4.4"><path d="M2.2 0 V4.4 M0 2.2 H4.4" stroke="#333" stroke-width="1.1"/></svg><span class="fbt"><i>关注</i></span></div><div class="cnt"><b>1</b> <i>关注</i></div></div></div>
<div class="card" style="left:451.70px;top:162.00px">
<div class="ct"><i>风水择日</i></div><div class="cd"><i>择日作为一种习俗，其之所由，久则莫</i><br><i>证；择日作为一种技术，至今已逾两千</i><br><i>年。</i></div>
<div class="cf"><div class="fb"><svg width="4.4" height="4.4" viewBox="0 0 4.4 4.4"><path d="M2.2 0 V4.4 M0 2.2 H4.4" stroke="#333" stroke-width="1.1"/></svg><span class="fbt"><i>关注</i></span></div><div class="cnt"><b>1</b> <i>关注</i></div></div></div>
<div class="card" style="left:605.90px;top:162.00px">
<div class="ct"><i>手相解析</i></div><div class="cd"><i>手是人体最重要的部位之一，对我们来</i><br><i>说，无论做什么我们都需要用到手。然</i><br><i>而，实际我们都使用自己的双手，但是</i><br><i>如何看手相却有很多人不知道。在相学</i><br><i>中，手相被称为“万相之首”，可以看出</i></div>
<div class="cf"><div class="fb"><svg width="4.4" height="4.4" viewBox="0 0 4.4 4.4"><path d="M2.2 0 V4.4 M0 2.2 H4.4" stroke="#333" stroke-width="1.1"/></svg><span class="fbt"><i>关注</i></span></div><div class="cnt"><b>1</b> <i>关注</i></div></div></div>
<div class="card" style="left:143.30px;top:259.40px">
<div class="ct"><i>周易八卦</i></div><div class="cd"><i>周易八卦是中国古代以追求天人合一广</i><br><i>泛运用的一种文化思想理论体系。政治</i><br><i>家、统治者、军事家用其运筹帷幄，治</i><br><i>国安邦；民众百姓则将其作为养生、预</i><br><i>测吉凶、经商忍利的工具。作为汉族</i>...</div>
<div class="cf"><div class="fb"><svg width="4.4" height="4.4" viewBox="0 0 4.4 4.4"><path d="M2.2 0 V4.4 M0 2.2 H4.4" stroke="#333" stroke-width="1.1"/></svg><span class="fbt"><i>关注</i></span></div><div class="cnt"><b>1</b> <i>关注</i></div></div></div>
<div class="card" style="left:297.50px;top:259.40px">
<div class="ct"><i>周公解梦</i></div><div class="cd"><i>《周公解梦》是古人的梦学卜吉凶的一</i><br><i>本丁民间流传的解梦书籍，共有七类梦</i><br><i>境的解述。书中的周公就是周公旦，孔</i><br><i>子梦的“吾不复梦见周公”在儒家经常会</i><br><i>出现。</i></div>
<div class="cf"><div class="fb"><svg width="4.4" height="4.4" viewBox="0 0 4.4 4.4"><path d="M2.2 0 V4.4 M0 2.2 H4.4" stroke="#333" stroke-width="1.1"/></svg><span class="fbt"><i>关注</i></span></div><div class="cnt"><b>1</b> <i>关注</i></div></div></div>
<div class="card" style="left:451.70px;top:259.40px">
<div class="ct"><i>周公</i></div><div class="cd"><i>暂无介绍</i></div>
<div class="cf"><div class="fb"><svg width="4.4" height="4.4" viewBox="0 0 4.4 4.4"><path d="M2.2 0 V4.4 M0 2.2 H4.4" stroke="#333" stroke-width="1.1"/></svg><span class="fbt"><i>关注</i></span></div><div class="cnt"><b>0</b> <i>关注</i></div></div></div>
<div class="card" style="left:605.90px;top:259.40px">
<div class="ct"><i>周易</i></div><div class="cd"><i>暂无介绍</i></div>
<div class="cf"><div class="fb"><svg width="4.4" height="4.4" viewBox="0 0 4.4 4.4"><path d="M2.2 0 V4.4 M0 2.2 H4.4" stroke="#333" stroke-width="1.1"/></svg><span class="fbt"><i>关注</i></span></div><div class="cnt"><b>0</b> <i>关注</i></div></div></div>
<div class="card" style="left:143.30px;top:356.80px">
<div class="ct"><i>风水</i></div><div class="cd"><i>暂无介绍</i></div>
<div class="cf"><div class="fb"><svg width="4.4" height="4.4" viewBox="0 0 4.4 4.4"><path d="M2.2 0 V4.4 M0 2.2 H4.4" stroke="#333" stroke-width="1.1"/></svg><span class="fbt"><i>关注</i></span></div><div class="cnt"><b>0</b> <i>关注</i></div></div></div>
<div class="card" style="left:297.50px;top:356.80px">
<div class="ct"><i>手相</i></div><div class="cd"><i>暂无介绍</i></div>
<div class="cf"><div class="fb"><svg width="4.4" height="4.4" viewBox="0 0 4.4 4.4"><path d="M2.2 0 V4.4 M0 2.2 H4.4" stroke="#333" stroke-width="1.1"/></svg><span class="fbt"><i>关注</i></span></div><div class="cnt"><b>0</b> <i>关注</i></div></div></div>
<div class="card" style="left:451.70px;top:356.80px">
<div class="ct"><i>面相</i></div><div class="cd"><i>暂无介绍</i></div>
<div class="cf"><div class="fb"><svg width="4.4" height="4.4" viewBox="0 0 4.4 4.4"><path d="M2.2 0 V4.4 M0 2.2 H4.4" stroke="#333" stroke-width="1.1"/></svg><span class="fbt"><i>关注</i></span></div><div class="cnt"><b>0</b> <i>关注</i></div></div></div>
<div class="card" style="left:605.90px;top:356.80px">
<div class="ct"><i>解梦</i></div><div class="cd"><i>暂无介绍</i></div>
<div class="cf"><div class="fb"><svg width="4.4" height="4.4" viewBox="0 0 4.4 4.4"><path d="M2.2 0 V4.4 M0 2.2 H4.4" stroke="#333" stroke-width="1.1"/></svg><span class="fbt"><i>关注</i></span></div><div class="cnt"><b>0</b> <i>关注</i></div></div></div>

<!-- scrollbar -->
<div class="abs" style="left:888px;top:97.6px;width:12px;height:346.4px;background:#f1f1f1"></div>
<div class="abs" style="left:889px;top:97.6px;width:10px;height:176px;background:#c1c1c1"></div>
<div class="abs" style="left:892.8px;top:299.9px;width:6.2px;height:39.7px;background:#5f5f5f;border-radius:3px"></div>
<div class="abs" style="left:893.3px;top:332.5px;width:5.2px;height:1px;background:#39c45a"></div>
<div class="abs" style="left:893.3px;top:335.5px;width:5.2px;height:1px;background:#39c45a"></div>
<svg class="abs" style="left:891.5px;top:435.3px" width="5" height="3.5" viewBox="0 0 5 3.5"><path d="M0 0 H5 L2.5 3.5Z" fill="#505050"/></svg>
<div class="abs" style="left:859.5px;top:328.3px;width:24px;height:24.5px;background:#fff"></div>
<svg class="abs" style="left:866px;top:334.5px" width="12" height="12" viewBox="0 0 12 12"><path d="M1 9 L1 11 L3 11 L9.5 4.5 L7.5 2.5Z M8.3 1.7 L9.5 0.5 L11.5 2.5 L10.3 3.7Z" fill="#727272"/></svg>

<!-- download shelf -->
<div id="dl"></div>
<svg class="abs" style="left:15.6px;top:456.6px" width="8" height="9.5" viewBox="0 0 8 9.5"><path d="M0.5 0.5 H5.5 L7.5 2.5 V9 H0.5Z" fill="#e8e8e8" stroke="#c9c9c9" stroke-width="0.8"/></svg>
<div class="abs" style="left:35px;top:457.6px;font-size:9.6px;line-height:11px;color:#3c4043;white-space:nowrap;letter-spacing:0.2px">huzhan verify 29....txt</div>
<svg class="abs" style="left:142.5px;top:458.5px" width="7" height="5" viewBox="0 0 7 5"><path d="M0.6 4.4 L3.5 1.2 L6.4 4.4" fill="none" stroke="#5f6368" stroke-width="1"/></svg>
<div class="abs" style="left:161.2px;top:448.6px;width:1px;height:25.4px;background:#dadce0"></div>
<div class="abs" style="left:818.4px;top:449.2px;width:56.2px;height:23.6px;border:1px solid #e3e3e3;border-radius:3px;background:#fff"></div>
<div class="abs" style="--z:-0.42px;left:829.7px;top:456.3px;font-size:8.58px;line-height:10px;color:#3c4043;white-space:nowrap"><i>全部显示</i></div>
<svg class="abs" style="left:883.8px;top:457.5px" width="7.5" height="6.8" viewBox="0 0 7.5 6.8"><path d="M0.6 0.4 L6.9 6.4 M6.9 0.4 L0.6 6.4" stroke="#5f6368" stroke-width="1.1"/></svg>
<div id="task"></div>
<div class="abs" style="left:825px;top:480.6px;width:20px;height:3px;overflow:hidden"><div style="margin-top:-1px;font-size:8px;line-height:8px;color:#fff;white-space:nowrap">20:44</div></div>
<div class="abs" style="left:896px;top:477.4px;width:1px;height:6px;background:#777"></div>
</body></html>
